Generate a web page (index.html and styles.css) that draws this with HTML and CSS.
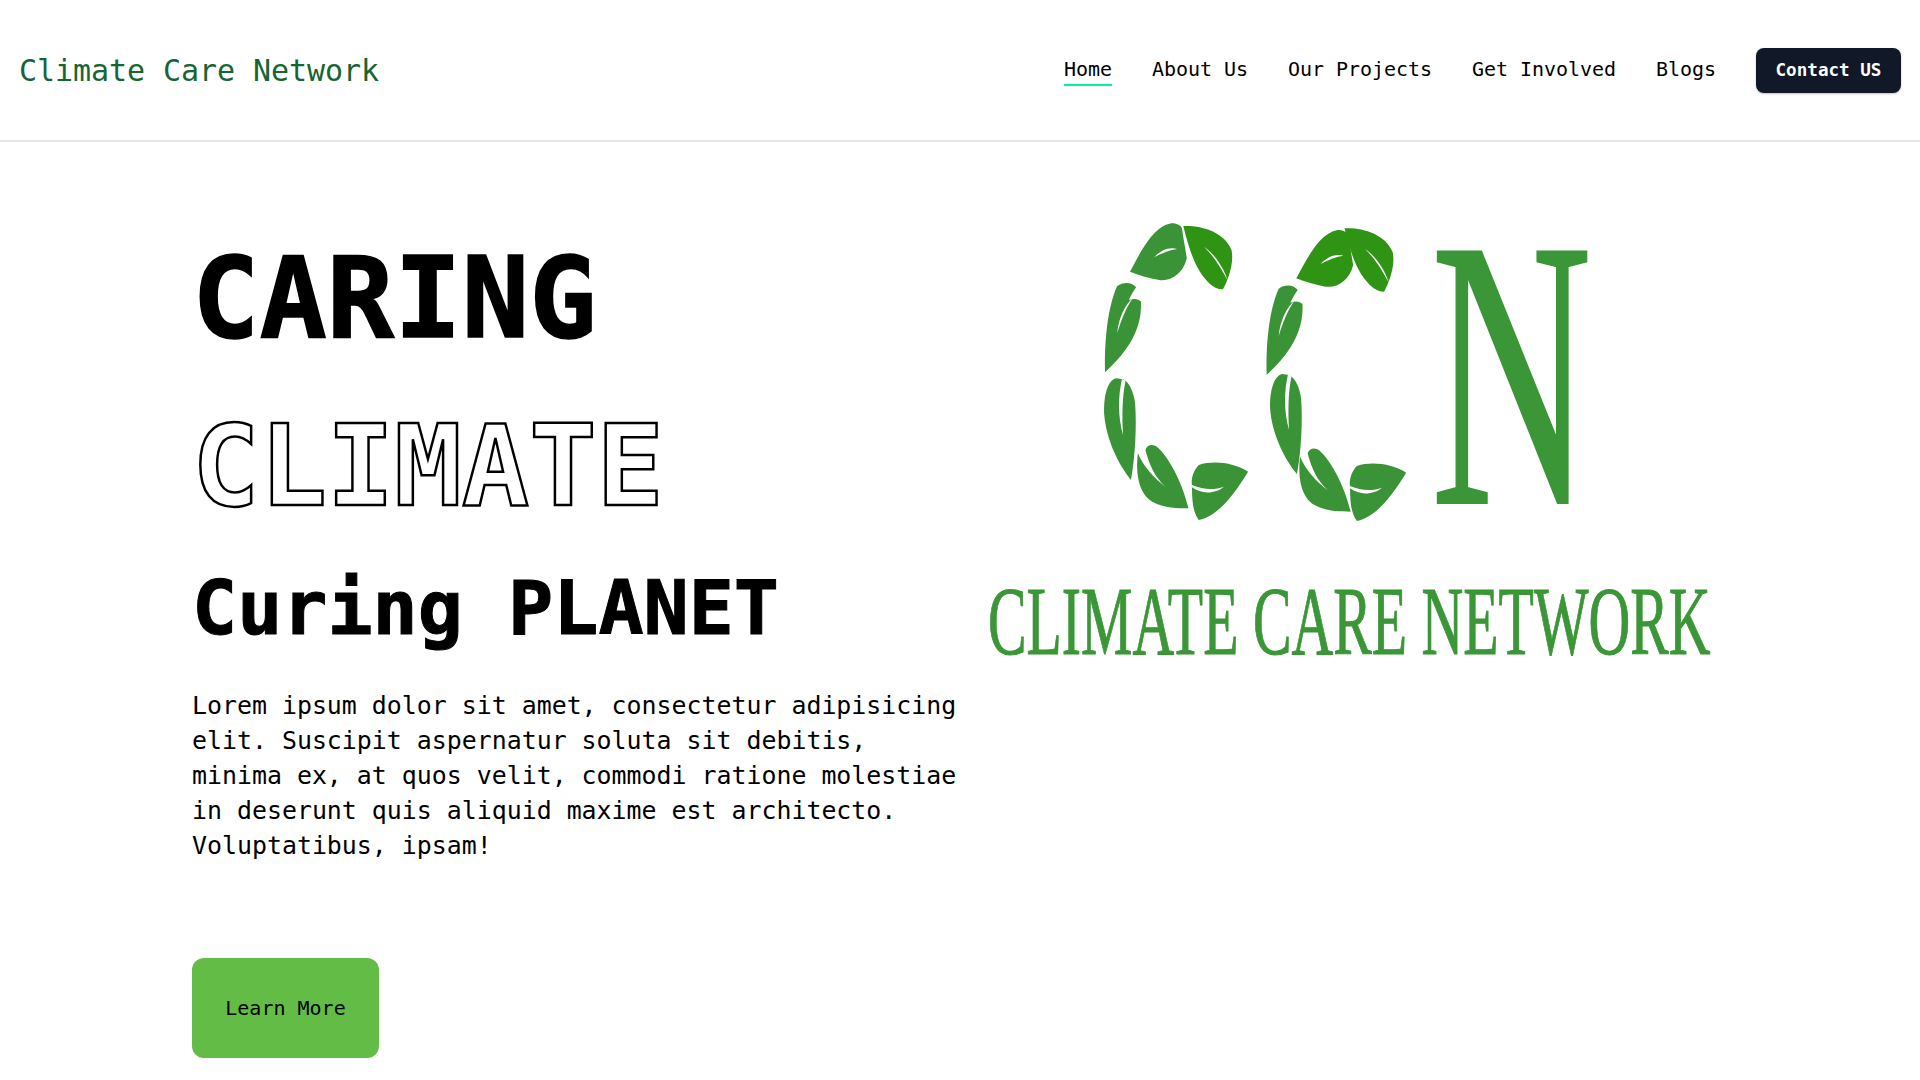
FILE: index.html
```html
<!DOCTYPE html>
<html lang="en">
<head>
<meta charset="utf-8">
<title>Climate Care Network</title>
<link rel="stylesheet" href="styles.css">
</head>
<body>
<header class="site-header">
  <a class="brand" href="#">Climate Care Network</a>
  <nav class="site-nav">
    <a class="nav-link active" href="#">Home</a>
    <a class="nav-link" href="#">About Us</a>
    <a class="nav-link" href="#">Our Projects</a>
    <a class="nav-link" href="#">Get Involved</a>
    <a class="nav-link" href="#">Blogs</a>
    <a class="contact-btn" href="#">Contact US</a>
  </nav>
</header>
<main class="hero">
  <section class="hero-copy">
    <h1 class="title">
      <span class="line-caring">CARING</span>
      <span class="line-climate">CLIMATE</span>
      <span class="line-curing">Curing PLANET</span>
    </h1>
    <p class="lead">Lorem ipsum dolor sit amet, consectetur adipisicing elit. Suscipit aspernatur soluta sit debitis, minima ex, at quos velit, commodi ratione molestiae in deserunt quis aliquid maxime est architecto. Voluptatibus, ipsam!</p>
    <a class="learn-btn" href="#">Learn More</a>
  </section>
  <svg class="hero-logo" viewBox="960 200 780 480" role="img" aria-label="Climate Care Network logo">
    <defs>
      <g id="leaf-a"><path d="M145 215C175 160 210 80 265 70C280 70 292 75 296 85C300 115 305 140 310 175C300 220 265 245 230 240C200 235 170 225 145 215Z"/><path class="vein" d="M215 172C235 150 260 140 282 147C262 150 240 158 215 172Z"/></g>
      <g id="leaf-b"><path d="M300 78C350 75 420 95 440 150C448 190 430 240 415 268C390 270 360 240 340 200C322 165 310 120 300 78Z"/><path class="vein" d="M360 140C395 165 420 210 428 240C410 205 390 170 360 140Z"/></g>
      <g id="leaf-c"><path d="M73 517C70 430 80 320 108 258C125 245 150 245 163 262C155 275 148 285 142 300C155 295 170 295 177 305C180 360 160 410 135 445C115 475 95 495 73 517Z"/><path class="vein" d="M108 400C112 355 130 315 155 292C135 320 120 360 108 400Z"/></g>
      <g id="leaf-d"><path d="M105 535C80 540 68 590 70 640C75 720 115 800 148 840C160 770 165 680 160 610C155 570 140 545 125 538Z"/><path class="vein" d="M122 536C110 590 110 650 125 705C122 650 122 595 132 542Z"/></g>
      <g id="leaf-e"><path d="M168 760C160 830 175 885 210 905C245 925 285 925 315 925C300 860 265 780 225 742C210 730 195 735 190 750Z"/><path class="vein" d="M190 750C200 790 215 830 248 860C215 835 185 800 168 760L175 745Z"/></g>
      <g id="leaf-f"><path d="M488 815C450 790 390 780 345 795C330 810 322 835 325 855C325 910 330 940 345 960C400 950 450 880 488 815Z"/><path class="vein" d="M325 862C355 885 395 880 418 860C390 870 360 870 325 855Z"/></g>
    </defs>
    <g transform="translate(1080 200) scale(.3444 .3333)">
      <use class="leaf" href="#leaf-a"/>
      <use class="leaf-bright" href="#leaf-b"/>
      <use class="leaf" href="#leaf-c"/>
      <use class="leaf" href="#leaf-d"/>
      <use class="leaf" href="#leaf-e"/>
      <use class="leaf" href="#leaf-f"/>
      <use class="leaf-bright" href="#leaf-a" transform="translate(483 20)"/>
      <use class="leaf-bright" href="#leaf-b" transform="translate(468 7)"/>
      <use class="leaf" href="#leaf-c" transform="translate(469 8)"/>
      <use class="leaf" href="#leaf-d" transform="translate(482 -5) scale(1 .985)"/>
      <use class="leaf" href="#leaf-e" transform="translate(471 10)"/>
      <use class="leaf" href="#leaf-f" transform="translate(459 3)"/>
    </g>
    <text class="logo-n" transform="translate(1431 503) scale(.58 1)">N</text>
    <text class="logo-name" transform="translate(988 654) scale(.59 1)">CLIMATE CARE NETWORK</text>
  </svg>
</main>
</body>
</html>
```

FILE: styles.css
```css
* { box-sizing: border-box; }
html, body { margin: 0; padding: 0; }
body {
  background: #fff;
  color: #000;
  font-family: "DejaVu Sans Mono", "Liberation Mono", monospace;
  height: 1080px;
  overflow: hidden;
}
a { color: inherit; text-decoration: none; }

.site-header {
  height: 142px;
  padding: 0 19px 0 19px;
  border-bottom: 2px solid #e5e5ea;
  display: flex;
  align-items: center;
  justify-content: space-between;
}
.brand {
  color: #166534;
  font-size: 30px;
  letter-spacing: -0.06px;
}
.site-nav {
  display: flex;
  align-items: center;
  gap: 40px;
}
.nav-link {
  font-size: 20px;
  line-height: 26px;
  padding-top: 2px;
  padding-bottom: 2px;
  border-bottom: 2px solid transparent;
  letter-spacing: -0.04px;
}
.nav-link.active { border-bottom-color: #00f59b; }
.contact-btn {
  width: 145px;
  height: 45px;
  display: flex;
  align-items: center;
  justify-content: center;
  background: #111827;
  color: #fff;
  font-size: 17.6px;
  font-weight: 700;
  border-radius: 8px;
  box-shadow: 0 1px 2px rgba(0, 0, 0, .25);
}

.hero {
  display: grid;
  grid-template-columns: 768px 780px;
  padding: 58px 0 0 192px;
  align-items: start;
}
.hero-copy { padding-top: 24px; }
.title { margin: 0; font-weight: 700; }
.title span { display: block; }
.line-caring {
  font-size: 112px;
  line-height: 148px;
  margin-bottom: 20px;
  -webkit-text-stroke: 1.5px #000;
}
.line-climate {
  font-size: 112px;
  line-height: 148px;
  color: #fff;
  -webkit-text-stroke: 2.5px #000;
}
.line-curing {
  font-size: 75px;
  line-height: 100px;
  margin-top: 18px;
  -webkit-text-stroke: 1px #000;
}
.lead {
  margin: 30px 0 0;
  font-size: 24.9px;
  line-height: 35px;
}
.learn-btn {
  margin-top: 95px;
  width: 187px;
  height: 100px;
  display: flex;
  align-items: center;
  justify-content: center;
  background: #62bc46;
  border-radius: 12px;
  font-size: 20px;
}

.hero-logo { display: block; width: 780px; height: 480px; overflow: visible; filter: blur(.5px); }
.leaf { fill: #3a9437; }
.leaf-bright { fill: #2f9413; }
.vein { fill: #fff; }
.logo-n {
  fill: #3a9637;
  stroke: #3a9637;
  stroke-width: 2px;
  font-family: "Liberation Serif", serif;
  font-size: 384px;
}
.logo-name {
  fill: #3a9637;
  stroke: #3a9637;
  stroke-width: 1px;
  font-family: "Liberation Serif", serif;
  font-size: 98px;
}
```
